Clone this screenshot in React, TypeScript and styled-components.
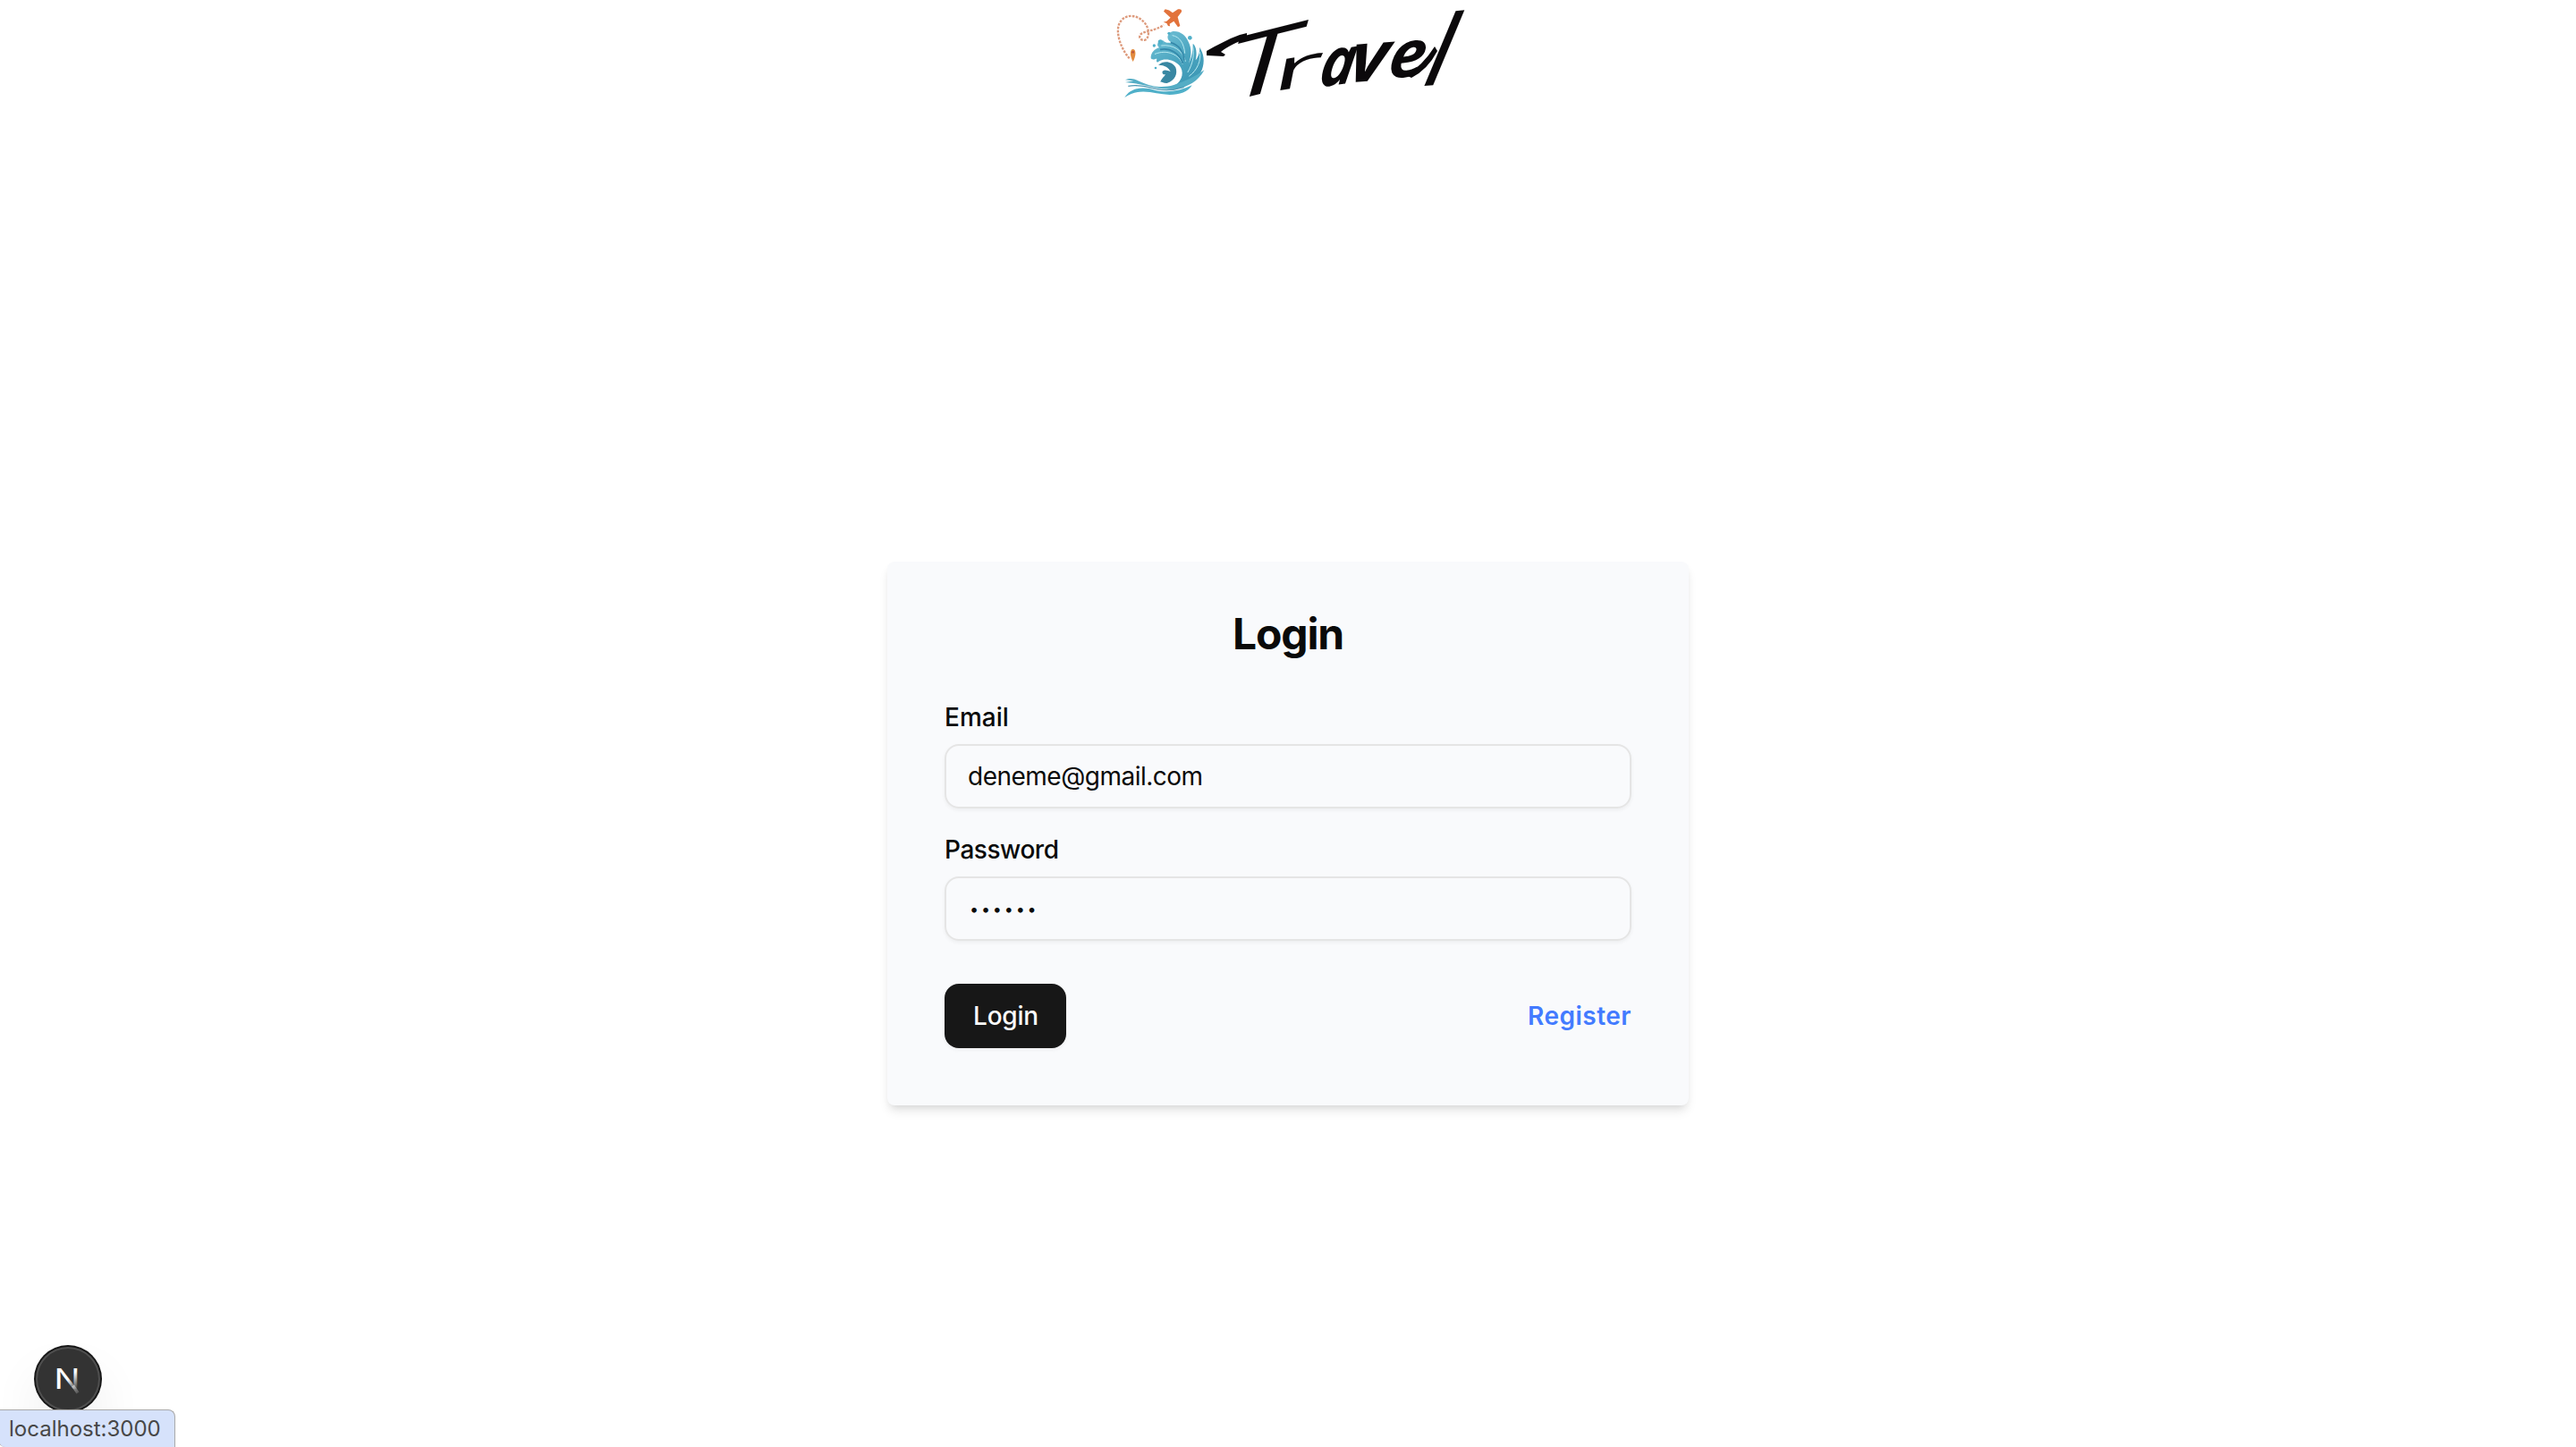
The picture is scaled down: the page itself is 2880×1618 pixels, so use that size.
import React from "react";
import styled, { createGlobalStyle } from "styled-components";

const GlobalStyle = createGlobalStyle`
  *, *::before, *::after { box-sizing: border-box; }
  body {
    margin: 0;
    background: #fff;
    color: #0a0a0a;
    font-family: Inter, "Liberation Sans", sans-serif;
  }
`;

const Page = styled.div`
  position: relative;
  display: flex;
  flex-direction: column;
  height: 1618px;
`;

const Header = styled.header`
  display: flex;
  justify-content: center;
  height: 120px;
`;

const Brand = styled.a`
  display: flex;
  width: 420px;
  height: 120px;
  color: #0b090b;
`;

const WaveMark = styled.svg`
  flex: none;
  width: 130px;
  height: 120px;
`;

const Wordmark = styled.span`
  position: relative;
  display: flex;
  width: 290px;
  height: 120px;
  margin-left: -20px;
  font-family: "Open Sans", sans-serif;
  font-size: 60px;
  line-height: 60px;
`;

const Brush = styled.svg`
  position: absolute;
  left: 0;
  top: 0;
  width: 290px;
  height: 120px;
`;

const Letter = styled.span<{ $matrix: string; $weight: number; $italic?: boolean }>`
  display: block;
  flex: none;
  width: 0;
  height: 60px;
  font-weight: ${(p) => p.$weight};
  font-style: ${(p) => (p.$italic ? "italic" : "normal")};
  transform-origin: 0 53.3px;
  transform: matrix(${(p) => p.$matrix});
`;

const Main = styled.main`
  display: flex;
  flex: 1;
  justify-content: center;
  align-items: flex-start;
  padding-top: 508px;
`;

const Card = styled.form`
  display: flex;
  flex-direction: column;
  width: 896px;
  height: 608px;
  padding: 49px 64px 64px;
  border-radius: 8px;
  background: #f9fafc;
  box-shadow: 0 8px 12px -2px rgba(0, 0, 0, 0.1), 0 4px 8px -4px rgba(0, 0, 0, 0.1);
`;

const Title = styled.h1`
  margin: 0;
  height: 63px;
  font-size: 48px;
  line-height: 64px;
  font-weight: 700;
  letter-spacing: -1.2px;
  text-align: center;
`;

const Field = styled.div<{ $gap: number }>`
  display: flex;
  flex-direction: column;
  gap: 16px;
  margin-top: ${(p) => p.$gap}px;
`;

const Label = styled.label<{ $tracking?: number }>`
  height: 28px;
  font-size: 28px;
  line-height: 28px;
  font-weight: 500;
  letter-spacing: ${(p) => p.$tracking ?? 0}px;
`;

const Input = styled.input`
  width: 100%;
  height: 72px;
  padding: 2px 24px;
  border: 2px solid #e5e5e5;
  border-radius: 16px;
  outline: none;
  background: transparent;
  color: #0a0a0a;
  font-family: inherit;
  font-size: 28px;
  letter-spacing: -0.5px;
  box-shadow: 0 2px 4px rgba(0, 0, 0, 0.05);
`;

const PasswordInput = styled(Input)`
  padding-left: 26px;
  font-size: 18px;
  letter-spacing: 2.8px;
`;

const Actions = styled.div`
  display: flex;
  justify-content: space-between;
  align-items: center;
  margin-top: 48px;
`;

const Submit = styled.button`
  width: 136px;
  height: 72px;
  padding: 0 0 0 1px;
  border: 0;
  border-radius: 16px;
  background: #171717;
  color: #fafafa;
  font-family: inherit;
  font-size: 28px;
  font-weight: 500;
  letter-spacing: -0.2px;
  box-shadow: 0 2px 4px rgba(0, 0, 0, 0.05);
`;

const RegisterLink = styled.a`
  color: #437bff;
  font-size: 28px;
  line-height: 40px;
  font-weight: 600;
  letter-spacing: 0.5px;
`;

const DevBadge = styled.div`
  position: absolute;
  left: 40px;
  top: 1506px;
  width: 72px;
  height: 72px;
  border-radius: 50%;
  background: #333;
  box-shadow: 0 0 0 2px #171717, inset 0 0 0 2px rgba(255, 255, 255, 0.14),
    0 32px 64px -16px rgba(0, 0, 0, 0.24);
`;

const BadgeMark = styled.svg`
  display: block;
  width: 72px;
  height: 72px;
`;

const StatusBubble = styled.div`
  position: absolute;
  left: -2px;
  bottom: 0;
  display: flex;
  align-items: center;
  width: 198px;
  height: 42px;
  padding-left: 11px;
  border: 1px solid #a9a9a9;
  border-bottom: 0;
  border-radius: 0 8px 0 8px;
  background: #d6e2fb;
  color: #474747;
  font-size: 24px;
  white-space: nowrap;
`;

const letters = [
  { char: "T", matrix: "2.4,-.6,-.51,1.75,23,63.7", weight: 400 },
  { char: "r", matrix: "2.2,-.35,-.22,1.1,80,49.7", weight: 500 },
  { char: "a", matrix: "1.12,-.15,-.2,1.25,133,44.7", weight: 700, italic: true },
  { char: "v", matrix: "1.38,-.1,-.2,1.3,166,39.7", weight: 700, italic: true },
  { char: "e", matrix: "1.22,-.1,-.2,1.22,210,34.7", weight: 700, italic: true },
  { char: "l", matrix: "1.1,-.1,-.77,1.84,247,43.7", weight: 700 },
];

function Logo() {
  return (
    <Brand>
      <WaveMark viewBox="0 0 390 360" fill="none">
        <defs>
          <linearGradient id="sea" x1="180" y1="110" x2="310" y2="310" gradientUnits="userSpaceOnUse">
            <stop offset="0" stopColor="#72c1d6" />
            <stop offset="0.5" stopColor="#4ba5c0" />
            <stop offset="1" stopColor="#3994b2" />
          </linearGradient>
        </defs>
        <path
          d="M98 196C72 166 53 118 62 85C74 48 119 43 148 75C166 96 166 126 151 134C137 137 127 126 136 115C149 103 181 105 213 84"
          stroke="#dd9a7c"
          strokeWidth="7"
          strokeDasharray="8 4"
        />
        <path
          d="M218 31Q232 33 243 43L261 31Q275 28 273 40L260 57L268 87L261 91L247 71L233 80L234 88L228 87L223 78L212 74L223 71L236 59L213 38Z"
          fill="#e2733c"
        />
        <path d="M110 207C99 187 99 165 110 165C121 165 121 187 110 207Z" fill="#e28b3e" />
        <circle cx="110" cy="175" r="4" fill="#b9523d" />
        <path
          d="M170 196C169 176 184 164 198 160C188 151 191 139 211 136C219 144 228 145 238 142C218 130 226 109 244 105C268 103 287 118 296 140C307 161 307 188 297 212C307 195 312 169 311 146C322 154 326 178 320 202C331 188 335 171 333 158C348 179 352 207 341 235C328 267 296 282 250 287C279 269 281 239 266 220C249 200 216 194 199 205C188 214 188 205 190 197C182 197 177 203 170 196Z"
          fill="url(#sea)"
        />
        <path
          d="M195 218C214 201 242 206 253 226C261 248 251 271 224 279C211 280 205 272 201 276C206 264 214 258 219 250C210 251 207 245 209 239C217 232 228 237 236 240C229 226 214 217 195 218Z"
          fill="#3987a2"
        />
        <path
          d="M84 268C104 259 121 267 137 275C166 289 207 297 247 285C283 274 318 257 349 235C330 273 293 292 258 298C203 305 151 281 84 276L112 271Z"
          fill="#54adc5"
        />
        <path
          d="M82 327C103 292 145 290 183 302C224 313 267 305 308 286C294 309 267 318 233 318C184 317 135 290 82 327Z"
          fill="#50b0c9"
        />
        <path d="M94 289C132 282 161 292 188 298C222 306 251 302 281 292" stroke="#4f99b4" strokeWidth="4" />
        <g fill="#50b0c9">
          <circle cx="231" cy="112" r="5" />
          <circle cx="202" cy="141" r="8" />
          <circle cx="181" cy="153" r="5" />
          <circle cx="301" cy="127" r="7" />
          <circle cx="186" cy="228" r="4" />
        </g>
        <g stroke="#b8e9f1" strokeWidth="3" strokeLinecap="round">
          <path d="M243 119C267 123 281 146 284 178" />
          <path d="M206 153C245 148 277 169 286 205" />
          <path d="M184 181C225 164 266 184 276 214" />
          <path d="M310 153C317 177 312 213 294 242" />
          <path d="M334 175C340 201 326 236 299 255" />
        </g>
        <path d="M201 166C235 159 268 180 277 213M237 143C264 151 280 174 282 203" stroke="#3488aa" strokeWidth="5" />
      </WaveMark>
      <Wordmark>
        {letters.map((l) => (
          <Letter key={l.char} $matrix={l.matrix} $weight={l.weight} $italic={l.italic}>
            {l.char}
          </Letter>
        ))}
        <Brush viewBox="0 0 290 120" fill="currentColor">
          <path d="M9 57C20 51 32 44 46 39L54 37L54 44C43 46 31 53 25 58L30 61L28 63L9 62Z" />
          <path d="M232 84Q250 74 264 52L267 57Q256 78 238 87Z" />
        </Brush>
      </Wordmark>
    </Brand>
  );
}

export default function App() {
  return (
    <>
      <GlobalStyle />
      <Page>
        <Header>
          <Logo />
        </Header>
        <Main>
          <Card>
            <Title>Login</Title>
            <Field $gap={48}>
              <Label htmlFor="email">Email</Label>
              <Input id="email" type="email" defaultValue="deneme@gmail.com" />
            </Field>
            <Field $gap={32}>
              <Label htmlFor="password" $tracking={-0.45}>
                Password
              </Label>
              <PasswordInput id="password" type="password" defaultValue="123456" />
            </Field>
            <Actions>
              <Submit type="button">Login</Submit>
              <RegisterLink>Register</RegisterLink>
            </Actions>
          </Card>
        </Main>
        <DevBadge>
          <BadgeMark viewBox="0 0 72 72">
            <defs>
              <linearGradient id="fade" x1="36" y1="36" x2="47" y2="47" gradientUnits="userSpaceOnUse">
                <stop offset="0" stopColor="#fff" />
                <stop offset="1" stopColor="#fff" stopOpacity="0" />
              </linearGradient>
              <linearGradient id="tail" x1="40" y1="43" x2="48" y2="53" gradientUnits="userSpaceOnUse">
                <stop offset="0" stopColor="#fff" stopOpacity="0.6" />
                <stop offset="1" stopColor="#fff" stopOpacity="0.1" />
              </linearGradient>
            </defs>
            <text
              x="20.5"
              y="47.3"
              fill="url(#fade)"
              fontFamily="Inter, sans-serif"
              fontSize="31"
              fontWeight="400"
              textLength="29"
              lengthAdjust="spacingAndGlyphs"
            >
              N
            </text>
            <path d="M41.5 43.5L47 51.5" stroke="url(#tail)" strokeWidth="3.5" />
          </BadgeMark>
        </DevBadge>
        <StatusBubble>localhost:3000</StatusBubble>
      </Page>
    </>
  );
}
